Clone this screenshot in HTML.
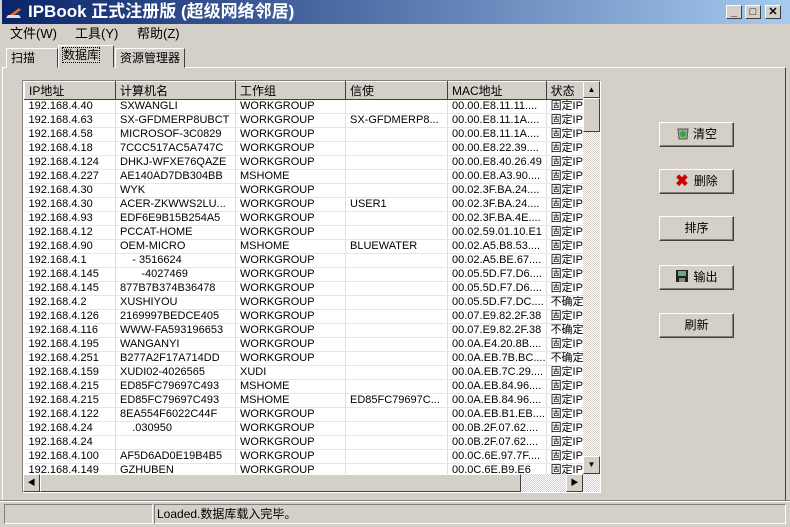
<!DOCTYPE html>
<html><head><meta charset="utf-8"><style>
*{margin:0;padding:0;box-sizing:border-box}
body{width:790px;height:527px;background:#d4d0c8;font-family:"Liberation Sans","Noto Sans CJK SC",sans-serif;font-size:11px;color:#000;position:relative;overflow:hidden}
.a{position:absolute}
.title{left:0;top:0;width:790px;height:24px;background:linear-gradient(90deg,#0a246a,#a6caf0);color:#fff;font-size:17px;font-weight:bold;line-height:24px;padding-left:26px;border-left:2px solid #d4d0c8}
.wb{top:5px;width:16px;height:14px;background:#d4d0c8;border:1px solid;border-color:#fff #404040 #404040 #fff;font-size:11px;text-align:center;line-height:12px;font-weight:bold;color:#000}
.menu{top:24px;height:20px;font-size:13px;line-height:20px}
.tab{height:20px;border:1px solid;border-color:#fff #404040 #d4d0c8 #fff;font-size:12px;line-height:18px;padding:0 4px}
.panel{left:2px;top:67px;width:784px;height:434px;border:1px solid;border-color:#fff #404040 #404040 #fff}
.lv{left:22px;top:80px;width:579px;height:413px;border:1px solid;border-color:#808080 #fff #fff #808080;background:#fff;overflow:hidden}
table{border-collapse:collapse;table-layout:fixed;position:absolute;left:1px;top:0}
td{height:14px;border-right:1px solid #ddd;border-bottom:1px solid #e6e6e6;padding-left:4px;white-space:nowrap;overflow:hidden;font-size:11px;line-height:13px}
th{height:17px;background:#d4d0c8;border:1px solid;border-color:#fff #404040 #404040 #fff;font-weight:normal;text-align:left;padding-left:4px;font-size:12px}
.btn{left:659px;width:75px;height:25px;border:1px solid;border-color:#fff #404040 #404040 #fff;box-shadow:inset -1px -1px #808080;font-size:12px;text-align:center;line-height:23px}
.sb{background:#d4d0c8;border:1px solid;border-color:#fff #404040 #404040 #fff}
.dith{background:repeating-conic-gradient(#fff 0 25%,#d4d0c8 0 50%) 0 0/2px 2px}
</style></head><body>
<div class="a title">IPBook 正式注册版 (超级网络邻居)</div>
<svg class="a" style="left:5px;top:5px" width="18" height="15"><path d="M2 12 L14 3 L16 5 L5 13Z" fill="#e07020"/><path d="M1 13 L16 13 L14 10 L3 10Z" fill="#ddd"/></svg>
<div class="a wb" style="left:726px">_</div>
<div class="a wb" style="left:745px">□</div>
<div class="a wb" style="left:765px">✕</div>
<div class="a menu" style="left:10px">文件(W)</div>
<div class="a menu" style="left:75px">工具(Y)</div>
<div class="a menu" style="left:137px">帮助(Z)</div>
<div class="a panel"></div>
<div class="a tab" style="left:6px;top:48px;width:52px">扫描</div>
<div class="a tab" style="left:58px;top:45px;width:56px;height:23px;background:#d4d0c8"><span style="outline:1px dotted #000">数据库</span></div>
<div class="a tab" style="left:115px;top:48px;width:70px;border-right-color:#404040">资源管理器</div>
<div class="a lv">
<table>
<colgroup><col style="width:91px"><col style="width:120px"><col style="width:110px"><col style="width:102px"><col style="width:98px"><col style="width:39px"></colgroup>
<tr><th>IP地址</th><th>计算机名</th><th>工作组</th><th>信使</th><th>MAC地址</th><th>状态</th></tr>
<tr><td>192.168.4.40</td><td>SXWANGLI</td><td>WORKGROUP</td><td></td><td>00.00.E8.11.11....</td><td>固定IP</td></tr>
<tr><td>192.168.4.63</td><td>SX-GFDMERP8UBCT</td><td>WORKGROUP</td><td>SX-GFDMERP8...</td><td>00.00.E8.11.1A....</td><td>固定IP</td></tr>
<tr><td>192.168.4.58</td><td>MICROSOF-3C0829</td><td>WORKGROUP</td><td></td><td>00.00.E8.11.1A....</td><td>固定IP</td></tr>
<tr><td>192.168.4.18</td><td>7CCC517AC5A747C</td><td>WORKGROUP</td><td></td><td>00.00.E8.22.39....</td><td>固定IP</td></tr>
<tr><td>192.168.4.124</td><td>DHKJ-WFXE76QAZE</td><td>WORKGROUP</td><td></td><td>00.00.E8.40.26.49</td><td>固定IP</td></tr>
<tr><td>192.168.4.227</td><td>AE140AD7DB304BB</td><td>MSHOME</td><td></td><td>00.00.E8.A3.90....</td><td>固定IP</td></tr>
<tr><td>192.168.4.30</td><td>WYK</td><td>WORKGROUP</td><td></td><td>00.02.3F.BA.24....</td><td>固定IP</td></tr>
<tr><td>192.168.4.30</td><td>ACER-ZKWWS2LU...</td><td>WORKGROUP</td><td>USER1</td><td>00.02.3F.BA.24....</td><td>固定IP</td></tr>
<tr><td>192.168.4.93</td><td>EDF6E9B15B254A5</td><td>WORKGROUP</td><td></td><td>00.02.3F.BA.4E....</td><td>固定IP</td></tr>
<tr><td>192.168.4.12</td><td>PCCAT-HOME</td><td>WORKGROUP</td><td></td><td>00.02.59.01.10.E1</td><td>固定IP</td></tr>
<tr><td>192.168.4.90</td><td>OEM-MICRO</td><td>MSHOME</td><td>BLUEWATER</td><td>00.02.A5.B8.53....</td><td>固定IP</td></tr>
<tr><td>192.168.4.1</td><td>&nbsp;&nbsp;&nbsp;&nbsp;- 3516624</td><td>WORKGROUP</td><td></td><td>00.02.A5.BE.67....</td><td>固定IP</td></tr>
<tr><td>192.168.4.145</td><td>&nbsp;&nbsp;&nbsp;&nbsp;&nbsp;&nbsp;&nbsp;-4027469</td><td>WORKGROUP</td><td></td><td>00.05.5D.F7.D6....</td><td>固定IP</td></tr>
<tr><td>192.168.4.145</td><td>877B7B374B36478</td><td>WORKGROUP</td><td></td><td>00.05.5D.F7.D6....</td><td>固定IP</td></tr>
<tr><td>192.168.4.2</td><td>XUSHIYOU</td><td>WORKGROUP</td><td></td><td>00.05.5D.F7.DC....</td><td>不确定</td></tr>
<tr><td>192.168.4.126</td><td>2169997BEDCE405</td><td>WORKGROUP</td><td></td><td>00.07.E9.82.2F.38</td><td>固定IP</td></tr>
<tr><td>192.168.4.116</td><td>WWW-FA593196653</td><td>WORKGROUP</td><td></td><td>00.07.E9.82.2F.38</td><td>不确定</td></tr>
<tr><td>192.168.4.195</td><td>WANGANYI</td><td>WORKGROUP</td><td></td><td>00.0A.E4.20.8B....</td><td>固定IP</td></tr>
<tr><td>192.168.4.251</td><td>B277A2F17A714DD</td><td>WORKGROUP</td><td></td><td>00.0A.EB.7B.BC....</td><td>不确定</td></tr>
<tr><td>192.168.4.159</td><td>XUDI02-4026565</td><td>XUDI</td><td></td><td>00.0A.EB.7C.29....</td><td>固定IP</td></tr>
<tr><td>192.168.4.215</td><td>ED85FC79697C493</td><td>MSHOME</td><td></td><td>00.0A.EB.84.96....</td><td>固定IP</td></tr>
<tr><td>192.168.4.215</td><td>ED85FC79697C493</td><td>MSHOME</td><td>ED85FC79697C...</td><td>00.0A.EB.84.96....</td><td>固定IP</td></tr>
<tr><td>192.168.4.122</td><td>8EA554F6022C44F</td><td>WORKGROUP</td><td></td><td>00.0A.EB.B1.EB....</td><td>固定IP</td></tr>
<tr><td>192.168.4.24</td><td>&nbsp;&nbsp;&nbsp;&nbsp;.030950</td><td>WORKGROUP</td><td></td><td>00.0B.2F.07.62....</td><td>固定IP</td></tr>
<tr><td>192.168.4.24</td><td></td><td>WORKGROUP</td><td></td><td>00.0B.2F.07.62....</td><td>固定IP</td></tr>
<tr><td>192.168.4.100</td><td>AF5D6AD0E19B4B5</td><td>WORKGROUP</td><td></td><td>00.0C.6E.97.7F....</td><td>固定IP</td></tr>
<tr><td>192.168.4.149</td><td>GZHUBEN</td><td>WORKGROUP</td><td></td><td>00.0C.6E.B9.E6</td><td>固定IP</td></tr>
</table>
<div class="a dith" style="left:560px;top:0;width:17px;height:393px"></div>
<div class="a sb" style="left:560px;top:0;width:17px;height:17px;font-size:8px;text-align:center;line-height:15px">▲</div>
<div class="a sb" style="left:560px;top:17px;width:17px;height:34px"></div>
<div class="a sb" style="left:560px;top:375px;width:17px;height:18px;font-size:8px;text-align:center;line-height:16px">▼</div>
<div class="a dith" style="left:0;top:393px;width:577px;height:18px"></div>
<div class="a sb" style="left:0;top:393px;width:17px;height:18px;font-size:8px;text-align:center;line-height:16px">◀</div>
<div class="a sb" style="left:17px;top:393px;width:481px;height:18px"></div>
<div class="a sb" style="left:543px;top:393px;width:17px;height:18px;font-size:8px;text-align:center;line-height:16px">▶</div>
</div>
<div class="a btn" style="top:122px"><svg width="14" height="14" style="vertical-align:-2px;margin-right:3px"><path d="M2 3 L12 3 L11 13 L3 13Z" fill="#9a9" stroke="#555"/><circle cx="7" cy="8" r="3" fill="#3a3"/></svg>清空</div>
<div class="a btn" style="top:169px"><span style="color:#c00;font-weight:bold;font-size:16px;margin-right:5px;vertical-align:-1px">✖</span>删除</div>
<div class="a btn" style="top:216px">排序</div>
<div class="a btn" style="top:265px"><svg width="14" height="14" style="vertical-align:-2px;margin-right:4px"><rect x="1" y="1" width="12" height="12" fill="#222"/><rect x="3" y="2" width="8" height="5" fill="#6a8"/><rect x="4" y="9" width="6" height="4" fill="#888"/></svg>输出</div>
<div class="a btn" style="top:313px">刷新</div>
<div class="a" style="left:0;top:500px;width:790px;height:1px;background:#808080"></div>
<div class="a" style="left:0;top:501px;width:790px;height:1px;background:#fff"></div>
<div class="a" style="left:4px;top:504px;width:149px;height:20px;border:1px solid;border-color:#808080 #fff #fff #808080"></div>
<div class="a" style="left:154px;top:504px;width:632px;height:20px;border:1px solid;border-color:#808080 #fff #fff #808080;font-size:12px;line-height:18px;padding-left:2px">Loaded.数据库载入完毕。</div>
</body></html>
